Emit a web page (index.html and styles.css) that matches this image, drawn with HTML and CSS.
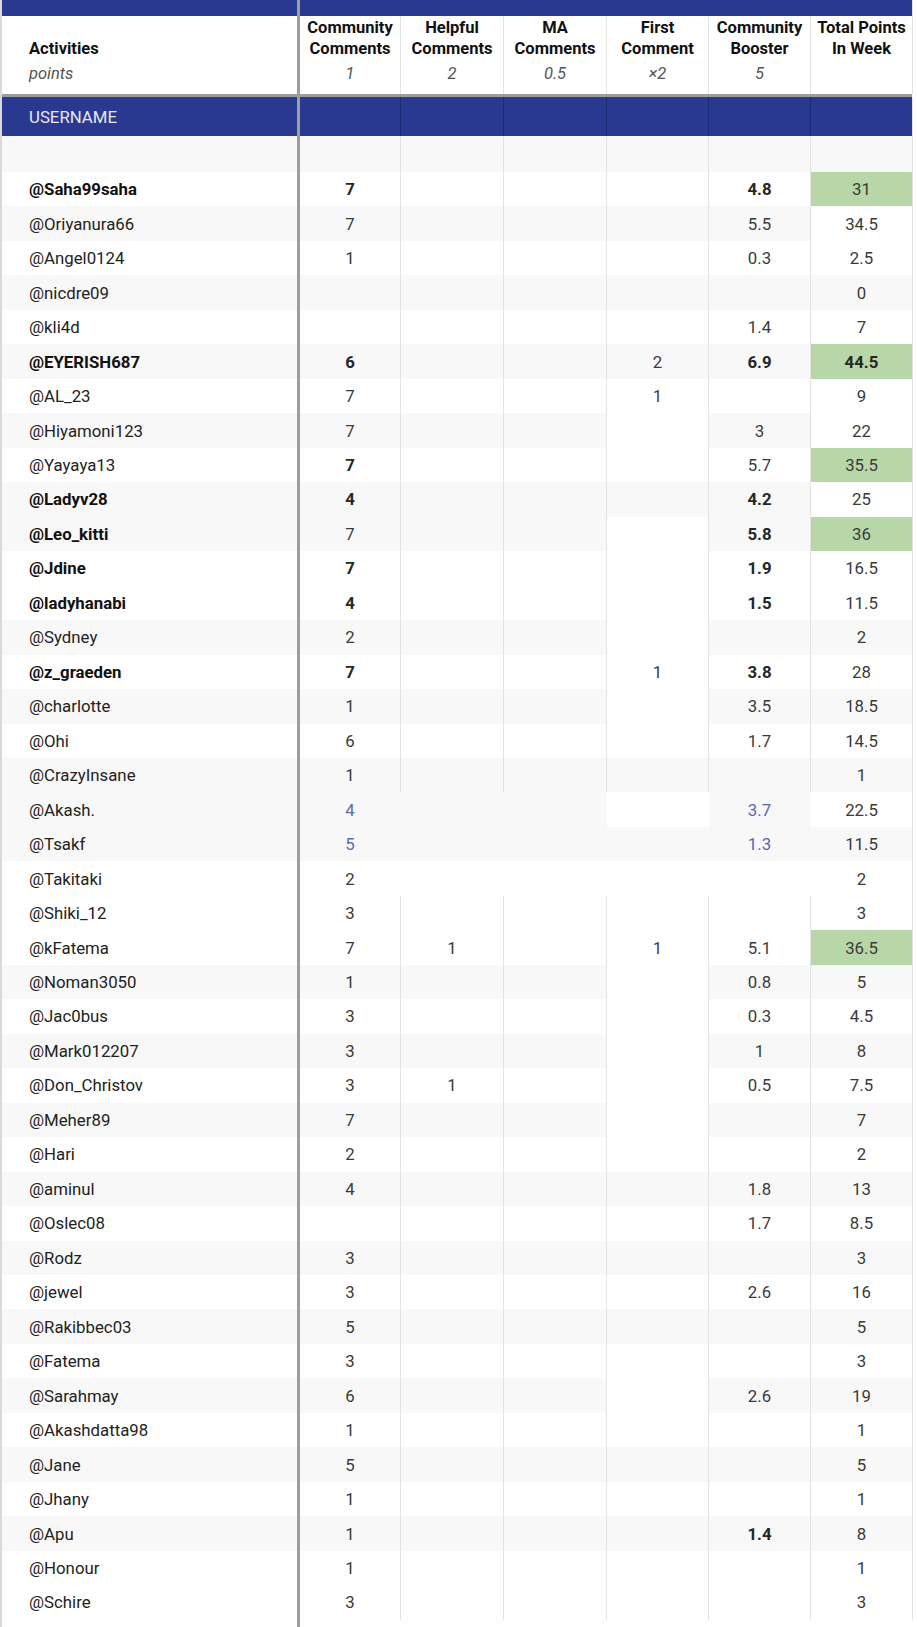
FILE: index.html
```html
<!DOCTYPE html>
<html lang="en">
<head>
<meta charset="utf-8">
<title>Activities points</title>
<link rel="stylesheet" href="styles.css">
</head>
<body>
<div class="sheet">
  <div class="grid topbar">
    <div class="c name"></div><div class="c"></div><div class="c"></div><div class="c"></div><div class="c"></div><div class="c"></div><div class="c"></div>
  </div>
  <div class="grid head">
    <div class="c name"><div class="t">Activities</div><div class="s">points</div></div>
    <div class="c"><div class="t">Community<br>Comments</div><div class="s">1</div></div>
    <div class="c"><div class="t">Helpful<br>Comments</div><div class="s">2</div></div>
    <div class="c"><div class="t">MA<br>Comments</div><div class="s">0.5</div></div>
    <div class="c"><div class="t">First<br>Comment</div><div class="s">×2</div></div>
    <div class="c"><div class="t">Community<br>Booster</div><div class="s">5</div></div>
    <div class="c"><div class="t">Total Points<br>In Week</div><div class="s">&nbsp;</div></div>
  </div>
  <div class="sep"></div>
  <div class="grid userrow">
    <div class="c name">USERNAME</div><div class="c"></div><div class="c"></div><div class="c"></div><div class="c"></div><div class="c"></div><div class="c"></div>
  </div>
  <div class="grid blank g">
    <div class="c name"></div><div class="c"></div><div class="c"></div><div class="c"></div><div class="c"></div><div class="c"></div><div class="c"></div>
  </div>

  <div class="grid row"><div class="c name b">@Saha99saha</div><div class="c b">7</div><div class="c"></div><div class="c"></div><div class="c"></div><div class="c b">4.8</div><div class="c hi">31</div></div>
  <div class="grid row g"><div class="c name">@Oriyanura66</div><div class="c">7</div><div class="c"></div><div class="c"></div><div class="c"></div><div class="c">5.5</div><div class="c w">34.5</div></div>
  <div class="grid row"><div class="c name">@Angel0124</div><div class="c">1</div><div class="c"></div><div class="c"></div><div class="c"></div><div class="c">0.3</div><div class="c">2.5</div></div>
  <div class="grid row g"><div class="c name">@nicdre09</div><div class="c"></div><div class="c"></div><div class="c"></div><div class="c"></div><div class="c"></div><div class="c">0</div></div>
  <div class="grid row"><div class="c name">@kli4d</div><div class="c"></div><div class="c"></div><div class="c"></div><div class="c"></div><div class="c">1.4</div><div class="c">7</div></div>
  <div class="grid row g"><div class="c name b">@EYERISH687</div><div class="c b">6</div><div class="c"></div><div class="c"></div><div class="c">2</div><div class="c b">6.9</div><div class="c hi b">44.5</div></div>
  <div class="grid row"><div class="c name">@AL_23</div><div class="c">7</div><div class="c"></div><div class="c"></div><div class="c">1</div><div class="c"></div><div class="c">9</div></div>
  <div class="grid row g"><div class="c name">@Hiyamoni123</div><div class="c">7</div><div class="c"></div><div class="c"></div><div class="c w"></div><div class="c">3</div><div class="c w">22</div></div>
  <div class="grid row"><div class="c name">@Yayaya13</div><div class="c b">7</div><div class="c"></div><div class="c"></div><div class="c"></div><div class="c">5.7</div><div class="c hi">35.5</div></div>
  <div class="grid row g"><div class="c name b">@Ladyv28</div><div class="c b">4</div><div class="c"></div><div class="c"></div><div class="c"></div><div class="c b">4.2</div><div class="c w">25</div></div>
  <div class="grid row g"><div class="c name b">@Leo_kitti</div><div class="c">7</div><div class="c"></div><div class="c"></div><div class="c w"></div><div class="c b">5.8</div><div class="c hi">36</div></div>
  <div class="grid row"><div class="c name b">@Jdine</div><div class="c b">7</div><div class="c"></div><div class="c"></div><div class="c"></div><div class="c b">1.9</div><div class="c">16.5</div></div>
  <div class="grid row"><div class="c name b">@ladyhanabi</div><div class="c b">4</div><div class="c"></div><div class="c"></div><div class="c"></div><div class="c b">1.5</div><div class="c">11.5</div></div>
  <div class="grid row g"><div class="c name">@Sydney</div><div class="c">2</div><div class="c"></div><div class="c"></div><div class="c w"></div><div class="c"></div><div class="c">2</div></div>
  <div class="grid row"><div class="c name b">@z_graeden</div><div class="c b">7</div><div class="c"></div><div class="c"></div><div class="c">1</div><div class="c b">3.8</div><div class="c">28</div></div>
  <div class="grid row g"><div class="c name">@charlotte</div><div class="c">1</div><div class="c"></div><div class="c"></div><div class="c w"></div><div class="c">3.5</div><div class="c">18.5</div></div>
  <div class="grid row"><div class="c name">@Ohi</div><div class="c">6</div><div class="c"></div><div class="c"></div><div class="c"></div><div class="c">1.7</div><div class="c">14.5</div></div>
  <div class="grid row g"><div class="c name">@CrazyInsane</div><div class="c">1</div><div class="c"></div><div class="c"></div><div class="c"></div><div class="c"></div><div class="c">1</div></div>
  <div class="grid row g nolines"><div class="c name">@Akash.</div><div class="c bl">4</div><div class="c"></div><div class="c"></div><div class="c w"></div><div class="c bl">3.7</div><div class="c w">22.5</div></div>
  <div class="grid row g nolines"><div class="c name">@Tsakf</div><div class="c bl">5</div><div class="c"></div><div class="c"></div><div class="c"></div><div class="c bl">1.3</div><div class="c">11.5</div></div>
  <div class="grid row nolines"><div class="c name">@Takitaki</div><div class="c">2</div><div class="c"></div><div class="c"></div><div class="c"></div><div class="c"></div><div class="c">2</div></div>
  <div class="grid row"><div class="c name">@Shiki_12</div><div class="c">3</div><div class="c"></div><div class="c"></div><div class="c"></div><div class="c"></div><div class="c">3</div></div>
  <div class="grid row"><div class="c name">@kFatema</div><div class="c">7</div><div class="c">1</div><div class="c"></div><div class="c">1</div><div class="c">5.1</div><div class="c hi">36.5</div></div>
  <div class="grid row g"><div class="c name">@Noman3050</div><div class="c">1</div><div class="c"></div><div class="c"></div><div class="c w"></div><div class="c">0.8</div><div class="c">5</div></div>
  <div class="grid row"><div class="c name">@Jac0bus</div><div class="c">3</div><div class="c"></div><div class="c"></div><div class="c"></div><div class="c">0.3</div><div class="c">4.5</div></div>
  <div class="grid row g"><div class="c name">@Mark012207</div><div class="c">3</div><div class="c"></div><div class="c"></div><div class="c w"></div><div class="c">1</div><div class="c">8</div></div>
  <div class="grid row"><div class="c name">@Don_Christov</div><div class="c">3</div><div class="c">1</div><div class="c"></div><div class="c"></div><div class="c">0.5</div><div class="c">7.5</div></div>
  <div class="grid row g"><div class="c name">@Meher89</div><div class="c">7</div><div class="c"></div><div class="c"></div><div class="c w"></div><div class="c"></div><div class="c">7</div></div>
  <div class="grid row"><div class="c name">@Hari</div><div class="c">2</div><div class="c"></div><div class="c"></div><div class="c"></div><div class="c"></div><div class="c">2</div></div>
  <div class="grid row g"><div class="c name">@aminul</div><div class="c">4</div><div class="c"></div><div class="c"></div><div class="c"></div><div class="c">1.8</div><div class="c">13</div></div>
  <div class="grid row"><div class="c name">@Oslec08</div><div class="c"></div><div class="c"></div><div class="c"></div><div class="c"></div><div class="c">1.7</div><div class="c">8.5</div></div>
  <div class="grid row g"><div class="c name">@Rodz</div><div class="c">3</div><div class="c"></div><div class="c"></div><div class="c"></div><div class="c"></div><div class="c">3</div></div>
  <div class="grid row"><div class="c name">@jewel</div><div class="c">3</div><div class="c"></div><div class="c"></div><div class="c"></div><div class="c">2.6</div><div class="c">16</div></div>
  <div class="grid row g"><div class="c name">@Rakibbec03</div><div class="c">5</div><div class="c"></div><div class="c"></div><div class="c"></div><div class="c"></div><div class="c">5</div></div>
  <div class="grid row"><div class="c name">@Fatema</div><div class="c">3</div><div class="c"></div><div class="c"></div><div class="c"></div><div class="c"></div><div class="c">3</div></div>
  <div class="grid row g"><div class="c name">@Sarahmay</div><div class="c">6</div><div class="c"></div><div class="c"></div><div class="c w"></div><div class="c">2.6</div><div class="c">19</div></div>
  <div class="grid row"><div class="c name">@Akashdatta98</div><div class="c">1</div><div class="c"></div><div class="c"></div><div class="c"></div><div class="c"></div><div class="c">1</div></div>
  <div class="grid row g"><div class="c name">@Jane</div><div class="c">5</div><div class="c"></div><div class="c"></div><div class="c"></div><div class="c"></div><div class="c">5</div></div>
  <div class="grid row"><div class="c name">@Jhany</div><div class="c">1</div><div class="c"></div><div class="c"></div><div class="c"></div><div class="c"></div><div class="c">1</div></div>
  <div class="grid row g"><div class="c name">@Apu</div><div class="c">1</div><div class="c"></div><div class="c"></div><div class="c"></div><div class="c b">1.4</div><div class="c">8</div></div>
  <div class="grid row"><div class="c name">@Honour</div><div class="c">1</div><div class="c"></div><div class="c"></div><div class="c"></div><div class="c"></div><div class="c">1</div></div>
  <div class="grid row"><div class="c name">@Schire</div><div class="c">3</div><div class="c"></div><div class="c"></div><div class="c"></div><div class="c"></div><div class="c">3</div></div>
  <div class="grid tail">
    <div class="c name"></div>
  </div>
</div>
</body>
</html>
```

FILE: styles.css
```css
* { box-sizing: border-box; }

html, body {
  margin: 0;
  padding: 0;
  background: #ffffff;
}

body {
  font-family: "Roboto", "Liberation Sans", sans-serif;
  font-size: 16.8px;
  color: #222222;
  width: 917px;
  height: 1627px;
  overflow: hidden;
}

.sheet {
  width: 913px;
  display: flex;
  flex-direction: column;
  border-left: 2px solid #d9d9d9;
}

.grid {
  display: grid;
  grid-template-columns: 298px 101px 103px 103px 102px 102px 102px;
}

.c {
  display: flex;
  align-items: center;
  justify-content: center;
  border-right: 1px solid #e3e3e3;
  white-space: nowrap;
  color: #3a3a3a;
}

.c.name {
  justify-content: flex-start;
  padding-left: 27px;
  border-right: 3px solid #9d9d9d;
  color: #222222;
}

/* top navy bar */
.topbar { height: 16px; }
.topbar .c { background: #29398f; border-right: none; }
.topbar .c:last-child { border-right: 1px solid #e3e3e3; }
.topbar .c.name { border-right: 3px solid #9d9d9d; }

/* header */
.head { height: 78px; background: #ffffff; }
.head .c {
  flex-direction: column;
  justify-content: flex-start;
  align-items: center;
  padding-top: 2px;
  font-size: 16.5px;
  color: #111111;
}
.head .c.name { align-items: flex-start; }
.head .t {
  height: 41px;
  display: flex;
  align-items: flex-end;
  font-weight: 700;
  line-height: 20.5px;
  text-align: center;
  color: #111111;
}
.head .s {
  margin-top: 5px;
  line-height: 20px;
  font-style: italic;
  color: #555555;
}

.sep { height: 3px; background: #9d9d9d; margin-right: 1px; }

/* username band */
.userrow { height: 39px; }
.userrow .c { background: #29398f; border-right: 1px solid #1d2a72; }
.userrow .c:last-child { border-right: 1px solid #e3e3e3; }
.userrow .c.name {
  color: #e6e8f5;
  border-right: 3px solid #9d9d9d;
  padding-top: 1px;
}

.blank { height: 36px; }

.row { height: 34.48px; }

.g .c { background: #f8f8f8; }
.c.w, .g .c.w { background: #ffffff; }
.c.hi, .g .c.hi { background: #b7d7a8; }

.nolines .c { border-right-color: transparent; }
.nolines .c:last-child { border-right-color: #e3e3e3; }
.nolines .c.name { border-right-color: #9d9d9d; }

.b { font-weight: 700; }
.c.b { color: #262626; }
.c.name.b { color: #111111; }
.c.bl { color: #5a68ad; }

.tail { height: 7px; }
.tail .c.name { height: 7px; }
```
